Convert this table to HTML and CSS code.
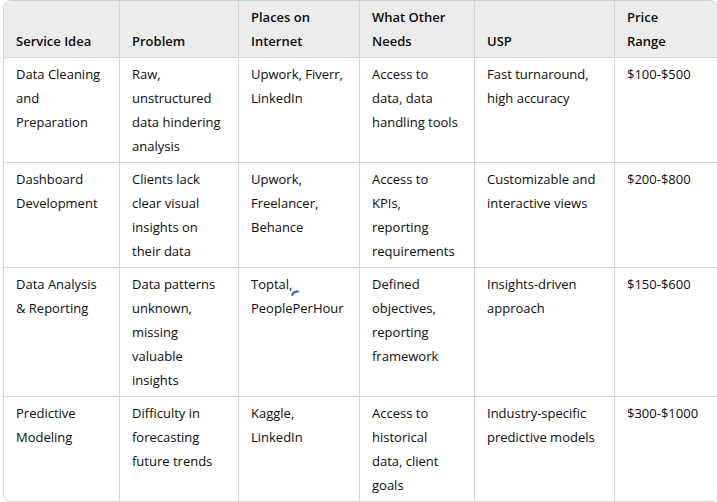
FILE: index.html
```html
<!DOCTYPE html>
<html>
<head>
<meta charset="utf-8">
<link rel="stylesheet" href="styles.css">
</head>
<body>
<div class="wrap">
<table class="grid">
  <colgroup>
    <col class="c1"><col class="c2"><col class="c3"><col class="c4"><col class="c5"><col class="c6">
  </colgroup>
  <thead>
    <tr>
      <th>Service Idea</th>
      <th>Problem</th>
      <th>Places on Internet</th>
      <th>What Other Needs</th>
      <th>USP</th>
      <th>Price Range</th>
    </tr>
  </thead>
  <tbody>
    <tr>
      <td>Data Cleaning and Preparation</td>
      <td>Raw, unstructured data hindering analysis</td>
      <td>Upwork, Fiverr, LinkedIn</td>
      <td>Access to data, data handling tools</td>
      <td>Fast turnaround, high accuracy</td>
      <td>$100-$500</td>
    </tr>
    <tr>
      <td>Dashboard Development</td>
      <td>Clients lack clear visual insights on their data</td>
      <td>Upwork, Freelancer, Behance</td>
      <td>Access to KPIs, reporting requirements</td>
      <td>Customizable and interactive views</td>
      <td>$200-$800</td>
    </tr>
    <tr>
      <td>Data Analysis &amp; Reporting</td>
      <td>Data patterns unknown, missing valuable insights</td>
      <td class="mark-cell">Toptal, PeoplePerHour<svg class="mark" width="8" height="6" viewBox="0 0 8 6"><path d="M1.2 5 Q2 1.6 7 1.4" fill="none" stroke="#2a58b8" stroke-width="2" stroke-linecap="round"/></svg></td>
      <td>Defined objectives, reporting framework</td>
      <td>Insights-driven approach</td>
      <td>$150-$600</td>
    </tr>
    <tr>
      <td>Predictive Modeling</td>
      <td>Difficulty in forecasting future trends</td>
      <td>Kaggle, LinkedIn</td>
      <td>Access to historical data, client goals</td>
      <td>Industry-specific predictive models</td>
      <td>$300-$1000</td>
    </tr>
  </tbody>
</table>
</div>
</body>
</html>
```

FILE: styles.css
```css
html, body {
  margin: 0;
  padding: 0;
  background: #ffffff;
}
body {
  font-family: "Open Sans", "Noto Sans", sans-serif;
  font-size: 13px;
  color: #0d0d0d;
}
.wrap {
  padding: 0 1px 0 3px;
}
.grid {
  width: 713px;
  border-collapse: separate;
  border-spacing: 0;
  table-layout: fixed;
  border: 1px solid #d4d4d4;
  border-radius: 8px;
  overflow: hidden;
}
.c1 { width: 116px; }
.c2 { width: 119px; }
.c3 { width: 121px; }
.c4 { width: 115px; }
.c5 { width: 140px; }
.c6 { width: 102px; }
th, td {
  text-align: left;
  line-height: 24px;
  padding: 4px 15px 4px 12px;
  border-right: 1px solid #d4d4d4;
  border-bottom: 1px solid #d4d4d4;
}
th:last-child, td:last-child { border-right: none; }
tbody tr:last-child td { border-bottom: none; }
th {
  background: #ececec;
  font-weight: 600;
  vertical-align: bottom;
  padding-right: 22px;
}
td {
  vertical-align: top;
}
.mark-cell { position: relative; }
.mark {
  position: absolute;
  left: 52px;
  top: 22px;
}
```
